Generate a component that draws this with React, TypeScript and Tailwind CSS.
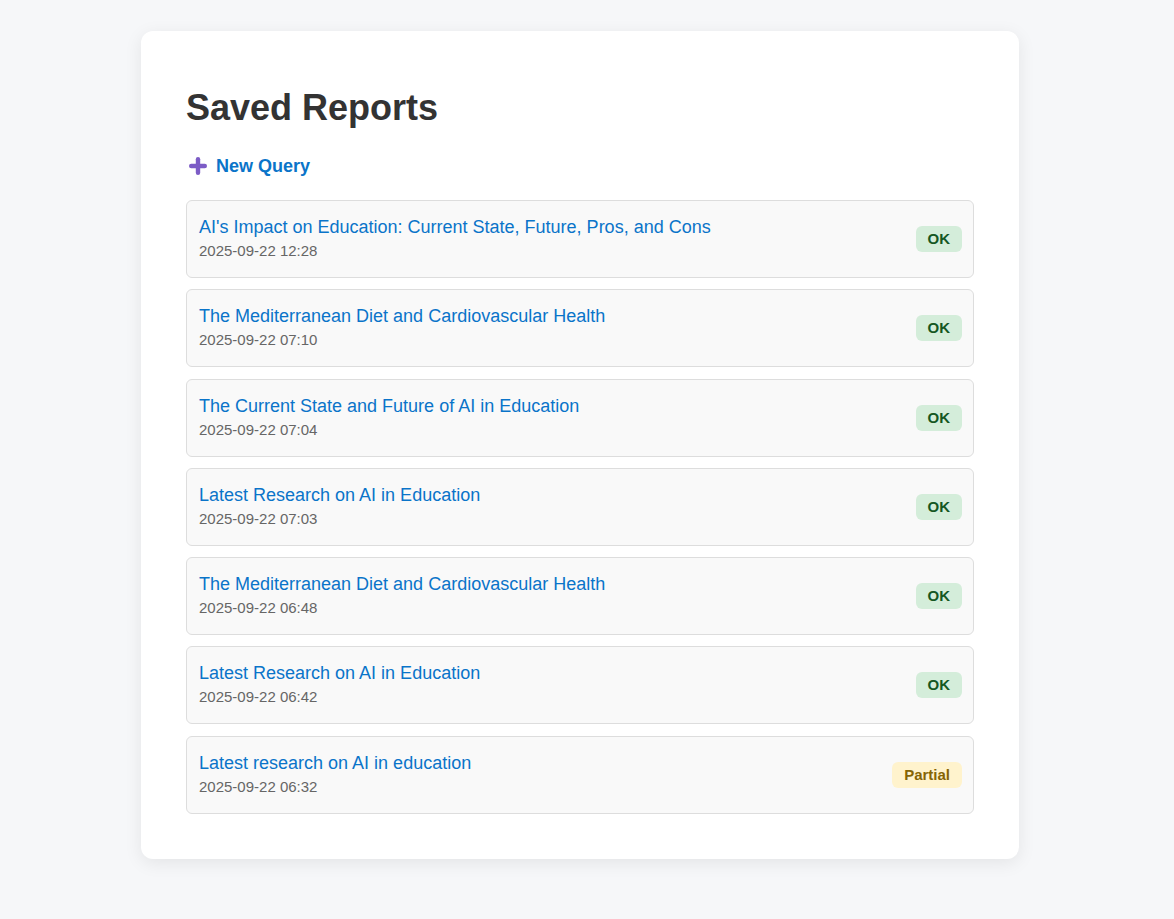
const reports = [
  { title: "AI's Impact on Education: Current State, Future, Pros, and Cons", date: "2025-09-22 12:28", status: "ok" },
  { title: "The Mediterranean Diet and Cardiovascular Health", date: "2025-09-22 07:10", status: "ok" },
  { title: "The Current State and Future of AI in Education", date: "2025-09-22 07:04", status: "ok" },
  { title: "Latest Research on AI in Education", date: "2025-09-22 07:03", status: "ok" },
  { title: "The Mediterranean Diet and Cardiovascular Health", date: "2025-09-22 06:48", status: "ok" },
  { title: "Latest Research on AI in Education", date: "2025-09-22 06:42", status: "ok" },
  { title: "Latest research on AI in education", date: "2025-09-22 06:32", status: "partial" },
];

function PlusIcon() {
  return (
    <svg width="20" height="20" viewBox="0 0 20 20" className="shrink-0">
      <rect x="7.8" y="1" width="4.4" height="18" rx="2.2" fill="#7c5cc6" />
      <rect x="1" y="7.8" width="18" height="4.4" rx="2.2" fill="#7c5cc6" />
    </svg>
  );
}

export default function App() {
  return (
    <div className="min-h-screen bg-[#f6f7f9] font-['Liberation_Sans',Arial,sans-serif] pt-[31px] pb-[60px]">
      <div className="mx-auto w-[878px] rounded-[12px] bg-white shadow-[0_4px_18px_rgba(0,0,0,0.08)] px-[45px] pt-[55px] pb-[45px] relative left-[-7px]">
        <h1 className="text-[36px] leading-[43px] font-bold text-[#333333]">Saved Reports</h1>

        <a href="#" className="mt-[25px] flex items-center gap-[8px] text-[18px] leading-[24px] font-bold text-[#0a74c9] w-fit ml-[2px]">
          <PlusIcon />
          New Query
        </a>

        <div className="mt-[22px] flex flex-col gap-[11.3px]">
          {reports.map((r, i) => (
            <div
              key={i}
              className="flex items-center justify-between rounded-[6px] border border-[#dddddd] bg-[#f9f9f9] pl-[12px] pr-[11px] py-[14px]"
            >
              <div className="flex flex-col">
                <a href="#" className="text-[18px] leading-[24px] text-[#0a74c9]">
                  {r.title}
                </a>
                <span className="text-[15px] leading-[24px] text-[#666666]">{r.date}</span>
              </div>
              {r.status === "ok" ? (
                <span className="rounded-[6px] bg-[#d4edda] px-[12px] py-[4px] text-[15px] leading-[18px] font-bold text-[#155724]">
                  OK
                </span>
              ) : (
                <span className="rounded-[6px] bg-[#fff3cd] px-[12px] py-[4px] text-[15px] leading-[18px] font-bold text-[#856404]">
                  Partial
                </span>
              )}
            </div>
          ))}
        </div>
      </div>
    </div>
  );
}
